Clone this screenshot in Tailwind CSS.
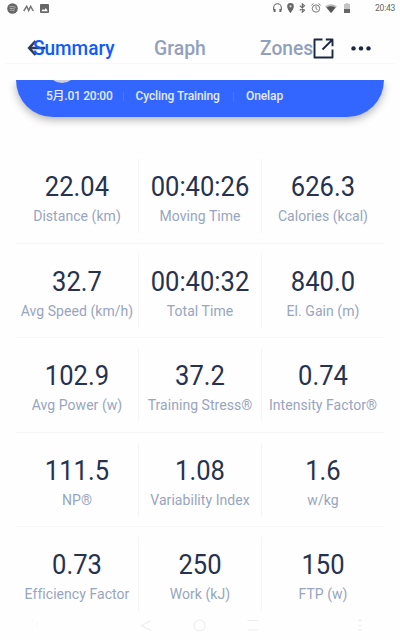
<!DOCTYPE html>
<html lang="en">
<head>
  <meta charset="UTF-8">
  <meta name="viewport" content="width=device-width, initial-scale=1.0">
  <title>Ride Summary</title>
  <script src="https://cdn.jsdelivr.net/npm/@tailwindcss/browser@4"></script>
</head>
<body class="bg-white font-['Roboto','Noto_Sans_CJK_SC',sans-serif]">

  <div class="relative w-[400px] h-[640px] overflow-hidden flex flex-col bg-[#fefefe]">

    <!-- status bar -->
    <div class="h-4 shrink-0 flex items-center justify-between pl-[7px] pr-[5px] text-[#666]">
      <div class="flex items-center gap-[5px]">
        <svg class="size-[11px]" viewBox="0 0 11 11" fill="none">
          <circle cx="5.5" cy="5.5" r="5.3" fill="#666"/>
          <path d="M2.4 3.8q3.3-1 6.3.6M2.7 5.7q2.9-.8 5.3.5M3 7.4q2.4-.6 4.3.5" stroke="#c4c4c4" stroke-width=".8"/>
        </svg>
        <svg class="w-[11px] h-[7px]" viewBox="0 0 11 7" fill="none" stroke="#777" stroke-width="1.5">
          <path d="M.7 6 3.7 1.3 5.7 5.6 7.6 1.3 10.3 6"/>
        </svg>
        <svg class="size-[9px] ml-[1px]" viewBox="0 0 9 9">
          <rect width="9" height="9" rx="1" fill="#666"/>
          <path d="M1.3 7.3 3 5l1.2 1.3L5.8 4l2 3.3z" fill="#fff"/>
        </svg>
      </div>
      <div class="flex items-center">
        <svg class="w-[9px] h-[10px] mr-[5px]" viewBox="0 0 9 10" fill="none" stroke="#666" stroke-width="1.1">
          <path d="M.7 7V4.5a3.8 3.8 0 0 1 7.6 0V7"/>
          <path d="M1.6 6v3M7.4 6v3" stroke-width="2"/>
        </svg>
        <svg class="w-[7px] h-[10px] mr-[5px]" viewBox="0 0 7 10">
          <path d="M3.5 0A3.3 3.3 0 0 0 .2 3.4C.2 6 3.5 10 3.5 10S6.8 6 6.8 3.4A3.3 3.3 0 0 0 3.5 0z" fill="#666"/>
          <circle cx="3.5" cy="3.3" r="1.1" fill="#ddd"/>
        </svg>
        <svg class="w-[7px] h-[10px] mr-[5px]" viewBox="0 0 7 10" fill="none" stroke="#666" stroke-width="1.1">
          <path d="M.8 2.6 5.5 7.2 3.3 9.2V.8L5.5 2.8.8 7.4"/>
        </svg>
        <svg class="size-[10px] mr-[4px]" viewBox="0 0 10 10" fill="none" stroke="#777" stroke-width="1">
          <circle cx="5" cy="5.5" r="3.7"/>
          <path d="M5 3.3v2.4l1.5 1M.4 2.2 2.4.6M9.6 2.2 7.6.6"/>
        </svg>
        <svg class="w-[12px] h-[9px] mr-[7px]" viewBox="0 0 12 9">
          <path d="M0 2.4Q6-2 12 2.4L6 9z" fill="#bbb"/>
          <path d="M1.5 3.5Q6 .8 10.5 3.5L6 9z" fill="#555"/>
        </svg>
        <svg class="w-[6px] h-[10px]" viewBox="0 0 6 10">
          <path d="M1.8 0h2.4v1H6v9H0V1h1.8z" fill="#c4c4c4"/>
          <path d="M0 6h6v4H0z" fill="#666"/>
        </svg>
        <span class="ml-[25px] w-[20px] text-[8.5px] leading-4 tracking-[-0.2px] whitespace-nowrap">20:43</span>
      </div>
    </div>

    <!-- tabs -->
    <div class="relative h-16 shrink-0">
      <div class="mx-[6px] h-12 border-b border-[#f8f8f8]"></div>
      <svg class="absolute left-[27px] top-[24px] w-[19px] h-[16px]" viewBox="0 0 19 16" fill="none" stroke="#303b50" stroke-width="2.6">
        <path d="M8.5 1 2.2 8l6.3 7M2.5 8h16"/>
      </svg>
      <span class="absolute left-[33px] top-[20px] text-[20px] leading-6 font-medium origin-left scale-x-[0.95] text-[#0d5bff]">Summary</span>
      <span class="absolute left-[154px] top-[20px] text-[20px] leading-6 font-medium origin-left scale-x-[0.97] text-[#91a0bf]">Graph</span>
      <span class="absolute left-[260px] top-[20px] text-[20px] leading-6 font-medium origin-left scale-x-[0.96] text-[#91a0bf]">Zones</span>
      <svg class="absolute left-[313px] top-[22px] size-[21px]" viewBox="0 0 21 21" fill="none" stroke="#1c2745" stroke-width="1.9" stroke-linejoin="round">
        <path d="M9.5 1.5H1.5v18h18v-8M12.8 1.5h6.7v6.7M19.2 1.8 9.5 11.5"/>
      </svg>
      <svg class="absolute left-[351px] top-[30px] w-[20px] h-[5px]" viewBox="0 0 20 5" fill="#1c2745">
        <circle cx="2.5" cy="2.4" r="2.2"/>
        <circle cx="10" cy="2.4" r="2.2"/>
        <circle cx="17.5" cy="2.4" r="2.2"/>
      </svg>
    </div>

    <!-- ride card, scrolled under the tabs -->
    <div class="h-[69px] shrink-0 overflow-hidden px-4">
      <div class="relative h-[37px] rounded-b-[37px] bg-[#3366ff] shadow-[0_3px_8px_rgba(0,0,0,0.3)]">
        <div class="absolute inset-x-0 top-0 h-4 overflow-hidden">
          <div class="absolute left-[31px] -top-[27px] size-[30px] rounded-full bg-[#ccd0d8]"></div>
        </div>
        <div class="flex items-center pt-[8px] pl-[30px] text-[12px] leading-4 font-medium text-[#e4ebff] whitespace-nowrap">
          <span class="w-[66px] tracking-[-0.25px]">5月.01 20:00</span>
          <span class="ml-[10.5px] w-px h-[9px] bg-[#4a77ff]"></span>
          <span class="ml-[12px] w-[85px] tracking-[-0.1px]">Cycling Training</span>
          <span class="ml-[12px] w-px h-[9px] bg-[#4a77ff]"></span>
          <span class="ml-[12.5px] tracking-[-0.1px]">Onelap</span>
        </div>
      </div>
    </div>

    <!-- stats -->
    <div id="stats" class="mx-4 grid grid-cols-[123px_123px_122px] auto-rows-[94.5px] shrink-0"></div>

    <!-- navigation bar -->
    <svg class="absolute left-0 top-[616px] w-[400px] h-[20px]" viewBox="0 0 400 20" fill="none" stroke="#ededed" stroke-width="1.2">
      <path d="M151 4.5 141.5 9.5 151 14.5"/>
      <circle cx="199.5" cy="9.5" r="5.5"/>
      <path d="M247.5 4.5h10.5M247.5 14h10.5"/>
      <path d="M358.5 4.5h3M358.5 9.5h3M358.5 14h3" stroke-width="1.6"/>
      <path d="M32.5 3v4M37 5v5" stroke="#f9f9f9"/>
    </svg>
  </div>

  <script>
    const stats = [
      ['22.04', 'Distance (km)'],
      ['00:40:26', 'Moving Time'],
      ['626.3', 'Calories (kcal)'],
      ['32.7', 'Avg Speed (km/h)'],
      ['00:40:32', 'Total Time'],
      ['840.0', 'El. Gain (m)'],
      ['102.9', 'Avg Power (w)'],
      ['37.2', 'Training Stress®'],
      ['0.74', 'Intensity Factor®'],
      ['111.5', 'NP®'],
      ['1.08', 'Variability Index'],
      ['1.6', 'w/kg'],
      ['0.73', 'Efficiency Factor'],
      ['250', 'Work (kJ)'],
      ['150', 'FTP (w)']
    ];

    const container = document.getElementById('stats');

    stats.forEach(([value, label], i) => {
      const cell = document.createElement('div');
      const divider = i % 3 < 2 ? 'border-r border-[#f5f5f5]' : '';
      const underline = i < stats.length - 3 ? 'border-b border-[#f6f6f6]' : '';
      cell.className = `pt-[10px] ${underline}`;
      cell.innerHTML = `
        <div class="w-full h-[74px] pt-[11px] text-center whitespace-nowrap ${divider}">
          <div class="text-[27.5px] leading-[34px] scale-x-[0.93] text-[#27324f]">${value}</div>
          <div class="mt-[2px] text-[14px] leading-5 tracking-[0.05px] text-[#98a5c1]">${label}</div>
        </div>
      `;
      container.appendChild(cell);
    });
  </script>

</body>
</html>
